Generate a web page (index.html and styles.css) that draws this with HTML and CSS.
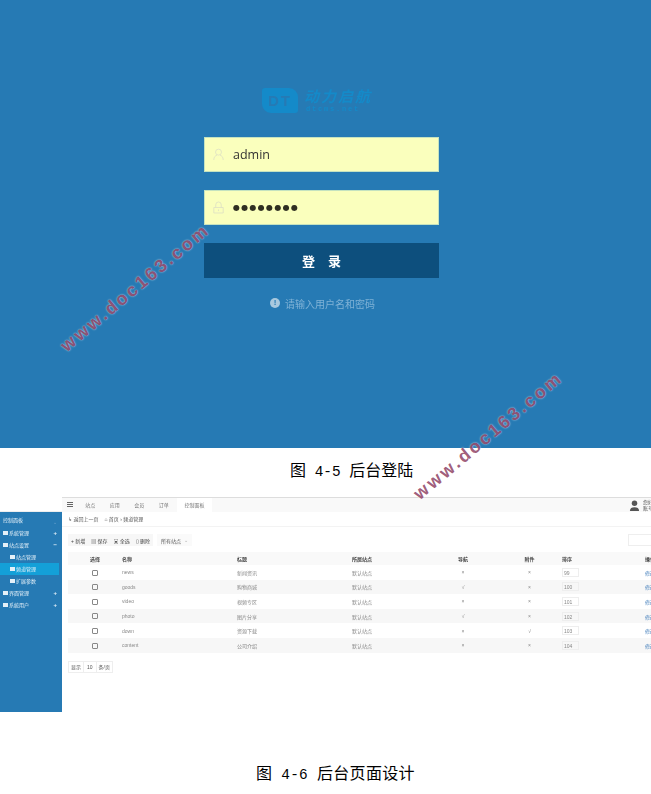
FILE: index.html
```html
<!DOCTYPE html>
<html lang="zh-CN">
<head>
  <meta charset="UTF-8">
  <title>后台登陆与页面设计</title>
  <meta name="viewport" content="width=device-width, initial-scale=1.0">
  <link rel="stylesheet" href="styles.css">
</head>
<body>

<div class="page">

  <div class="login">
    <div class="logo">
      <div class="logo-mark">DT</div>
      <div class="logo-words">
        <div class="logo-cn">动力启航</div>
        <div class="logo-en">dtcms.net</div>
      </div>
    </div>

    <div class="field">
      <svg class="field-icon" viewBox="0 0 14 16"><circle cx="7" cy="5" r="3.8"/><path d="M1 15c0-4 2-5.500 4-6M13 15c0-4-2-5.500-4-6"/></svg>
      <span>admin</span>
    </div>
    <div class="field">
      <svg class="field-icon" viewBox="0 0 14 16"><path d="M3.500 8V4.500a3.500 3.500 0 0 1 7 0V8"/><path d="M1 8h12v7H1z"/><path d="M7 10.500v2"/></svg>
      <span class="dots">●●●●●●●●</span>
    </div>
    <div class="login-btn">登<i></i>录</div>

    <div class="hint">
      <span class="hint-icon">!</span>
      <span>请输入用户名和密码</span>
    </div>
  </div>

  <div class="caption caption-one">图<span class="latin"> 4-5 </span>后台登陆</div>

  <div class="admin">
    <div class="side">
      <div class="side-logo"></div>
      <div class="side-menu">
        <div class="side-title"><span>控制面板</span><em>⌄</em></div>
        <div class="side-item"><b></b><span>系统管理</span><em>+</em></div>
        <div class="side-item"><b></b><span>站点设置</span><em>−</em></div>
        <div class="side-item sub"><b></b><span>站点管理</span></div>
        <div class="side-item sub on"><b></b><span>频道管理</span></div>
        <div class="side-item sub"><b></b><span>扩展参数</span></div>
        <div class="side-item"><b></b><span>界面管理</span><em>+</em></div>
        <div class="side-item"><b></b><span>系统用户</span><em>+</em></div>
      </div>
    </div>

    <div class="main">
      <div class="topbar">
        <div class="burger"><i></i><i></i><i></i></div>
        <div class="tab">站点</div>
        <div class="tab">应用</div>
        <div class="tab">会员</div>
        <div class="tab">订单</div>
        <div class="tab active">控制面板</div>
        <div class="user">
          <svg viewBox="0 0 12 12"><circle cx="6" cy="3.500" r="3"/><path d="M1 12c0-3 2-4 5-4s5 1 5 4z"/></svg>
          <div>您好<br>账号</div>
        </div>
      </div>

      <div class="crumbs">
        <span>↳ 返回上一页</span>
        <span>⌂ 首页 › 频道管理</span>
      </div>

      <div class="tools">
        <div class="tool-group">
          <span>+ 新增</span>
          <span>▤ 保存</span>
          <span>▣ 全选</span>
          <span>▯ 删除</span>
        </div>
        <div class="tool-select"><span>所有站点</span><em>⌄</em></div>
        <div class="tool-search"></div>
      </div>

      <table class="grid">
        <thead>
          <tr>
            <th class="c-check">选择</th>
            <th class="c-name">名称</th>
            <th class="c-title">标题</th>
            <th class="c-site">所属站点</th>
            <th class="c-mid">导航</th>
            <th class="c-mid2">附件</th>
            <th class="c-sort">排序</th>
            <th class="c-op">操作</th>
          </tr>
        </thead>
        <tbody>
          <tr><td class="c-check"><i class="box"></i></td><td>news</td><td>新闻资讯</td><td>默认站点</td><td class="c-mid">×</td><td class="c-mid2">×</td><td><span class="num">99</span></td><td class="link">修改</td></tr>
          <tr><td class="c-check"><i class="box"></i></td><td>goods</td><td>购物商城</td><td>默认站点</td><td class="c-mid">√</td><td class="c-mid2">×</td><td><span class="num">100</span></td><td class="link">修改</td></tr>
          <tr><td class="c-check"><i class="box"></i></td><td>video</td><td>视频专区</td><td>默认站点</td><td class="c-mid">×</td><td class="c-mid2">×</td><td><span class="num">101</span></td><td class="link">修改</td></tr>
          <tr><td class="c-check"><i class="box"></i></td><td>photo</td><td>图片分享</td><td>默认站点</td><td class="c-mid">√</td><td class="c-mid2">×</td><td><span class="num">102</span></td><td class="link">修改</td></tr>
          <tr><td class="c-check"><i class="box"></i></td><td>down</td><td>资源下载</td><td>默认站点</td><td class="c-mid">×</td><td class="c-mid2">√</td><td><span class="num">103</span></td><td class="link">修改</td></tr>
          <tr><td class="c-check"><i class="box"></i></td><td>content</td><td>公司介绍</td><td>默认站点</td><td class="c-mid">×</td><td class="c-mid2">×</td><td><span class="num">104</span></td><td class="link">修改</td></tr>
        </tbody>
      </table>

      <div class="pager">
        <span>显示</span>
        <span>10</span>
        <span>条/页</span>
      </div>
    </div>
  </div>

  <div class="caption caption-two">图<span class="latin"> 4-6 </span>后台页面设计</div>

  <div class="mark mark-one">www.doc163.com</div>
  <div class="mark mark-two">www.doc163.com</div>

</div>

</body>
</html>
```

FILE: styles.css
```css
html, body { margin: 0; padding: 0; background: #fff; }
body { font-family: "Liberation Sans", "Noto Sans CJK SC", sans-serif; }

.page {
  position: relative;
  width: 651px;
  height: 794px;
  overflow: hidden;
}

/* login */
.login {
  height: 448px;
  background: #267ab4;
  display: flex;
  flex-direction: column;
  align-items: flex-start;
  box-sizing: border-box;
  padding: 88px 0 0 204px;
  filter: blur(0.5px);
}
.logo {
  display: flex;
  gap: 6px;
  height: 25px;
  margin-bottom: 24px;
  margin-left: 58px;
}
.logo-mark {
  width: 36px;
  height: 25px;
  background: #148ac9;
  border-radius: 3px 9px 3px 9px;
  color: #267ab4;
  font: bold 15px/25px "Liberation Sans", sans-serif;
  letter-spacing: 2px;
  text-align: center;
}
.logo-cn {
  color: #148ac9;
  font: italic bold 15px/16px "Noto Sans CJK SC", sans-serif;
  letter-spacing: 2px;
}
.logo-en {
  color: #148ac9;
  font: bold 7px/7px "Liberation Mono", monospace;
  letter-spacing: 1.800px;
  padding: 2px 0 0 2px;
}

.field {
  width: 235px;
  height: 35px;
  box-sizing: border-box;
  margin-bottom: 18px;
  background: #faffbd;
  border: 1px solid #c4e2c0;
  display: flex;
  align-items: center;
  padding: 0 0 1px 8px;
  color: #333;
  font: 12.500px "Open Sans", sans-serif;
}
.field-icon {
  width: 11px;
  height: 13px;
  margin-right: 9px;
  fill: none;
  stroke: #dcdfc4;
  stroke-width: 1;
}
.dots { font: 8px "DejaVu Sans", sans-serif; letter-spacing: 1.300px; color: #2f2f22; }

.login-btn {
  width: 235px;
  height: 35px;
  background: #0d4f7d;
  color: #fff;
  font: bold 13px/35px "Noto Sans CJK SC", sans-serif;
  display: flex;
  justify-content: center;
}
.login-btn i { width: 13px; }

.hint {
  margin: 19px 0 0 66px;
  display: flex;
  align-items: center;
  gap: 5px;
  color: #7fb2d6;
  font: 10px/14px "Noto Sans CJK SC", sans-serif;
}
.hint-icon {
  width: 10px;
  height: 10px;
  border-radius: 50%;
  background: #a8c8de;
  color: #267ab4;
  font: bold 8px/10px "Liberation Sans", sans-serif;
  text-align: center;
  margin-top: -3px;
}

/* captions */
.caption {
  color: #000;
  font: 16px/18px "Noto Sans CJK SC", sans-serif;
}
.latin { font: 14.400px/18px "Liberation Mono", monospace; white-space: pre; }
.caption-one { height: 49px; box-sizing: border-box; padding: 12px 0 0 290px; }
.caption-two { padding: 51px 0 0 256px; letter-spacing: 0.300px; }

/* admin screen */
.admin {
  height: 215px;
  display: flex;
  font-size: 5px;
  color: #555;
  filter: blur(0.45px);
}
.side { width: 62px; flex: none; display: flex; flex-direction: column; }
.side-logo { height: 15px; box-sizing: border-box; background: #fff; border-bottom: 1px solid #eee; }
.side-menu { flex: 1; background: #267ab4; color: #e4f0f8; }
.side-title, .side-item {
  height: 12px;
  line-height: 12px;
  display: flex;
  align-items: center;
  padding: 0 5px 0 3px;
}
.side-title { height: 15px; }
.side-title em { margin-left: auto; margin-top: 4px; font-style: normal; color: #6fa8d0; }
.side-item b { width: 5px; height: 4px; background: #e4f0f8; margin-right: 1px; }
.side-item em { margin-left: auto; font-style: normal; font-size: 6px; font-weight: bold; }
.side-item.sub { padding-left: 10px; margin-right: 3px; }
.side-item.on { background: #14a0d8; }

.main { flex: 1; min-width: 0; }

.topbar {
  height: 15px;
  box-sizing: border-box;
  border-top: 1px solid #ddd;
  background: #f9f9f9;
  display: flex;
  align-items: center;
  padding-left: 5px;
}
.burger { width: 6px; margin-right: 5px; }
.burger i { display: block; height: 1px; margin-bottom: 1px; background: #666; }
.tab { width: 24.500px; text-align: center; line-height: 14px; color: #777; }
.tab.active { width: 35px; background: #fff; margin-left: 1px; }
.user {
  margin-left: auto;
  display: flex;
  align-items: center;
  gap: 3px;
  width: 22px;
  flex: none;
  line-height: 6px;
  white-space: nowrap;
}
.user svg { width: 11px; height: 11px; flex: none; fill: #555; }

.crumbs {
  height: 15px;
  box-sizing: border-box;
  border-bottom: 1px solid #f3f3f3;
  display: flex;
  gap: 6px;
  align-items: center;
  padding: 0 0 2px 6px;
}

.tools {
  display: flex;
  gap: 4px;
  margin: 7px 0 6px 6px;
  height: 12px;
}
.tool-group {
  width: 85px;
  background: #f7f7f7;
  display: flex;
  justify-content: space-around;
  align-items: center;
  color: #444;
}
.tool-select {
  width: 35px;
  box-sizing: border-box;
  background: #fafafa;
  display: flex;
  align-items: center;
  justify-content: space-between;
  padding: 0 4px;
}
.tool-select em { font-style: normal; color: #aaa; }
.tool-search {
  margin-left: auto;
  width: 23px;
  box-sizing: border-box;
  border: 1px solid #eee;
  border-right: 0;
}

.grid {
  margin-left: 6px;
  width: 605px;
  border-collapse: collapse;
  table-layout: fixed;
}
.grid th, .grid td {
  height: 14.600px;
  padding: 0;
  text-align: left;
  white-space: nowrap;
  overflow: hidden;
  color: #888;
}
.grid th { height: 13px; background: #f9f9f9; color: #444; font-weight: bold; }
.grid tbody tr:nth-child(even) td { background: #f7f7f7; }
.grid .c-check { width: 54px; text-align: center; }
.grid .c-name { width: 115px; }
.grid .c-title { width: 115px; }
.grid .c-site { width: 93px; }
.grid .c-mid { width: 36px; text-align: center; }
.grid .c-mid2 { width: 81px; padding-left: 16px; box-sizing: border-box; text-align: center; }
.grid .c-sort { width: 83px; }
.grid .c-op { width: 28px; }
.grid .link { color: #3a78b8; }

.box {
  display: inline-block;
  width: 4px;
  height: 4px;
  border: 1px solid #888;
  border-radius: 1px;
  vertical-align: middle;
}
.num {
  display: inline-block;
  width: 17px;
  height: 9px;
  line-height: 8px;
  box-sizing: border-box;
  border: 1px solid #eee;
  padding-left: 1px;
}

.pager {
  display: inline-flex;
  margin: 8px 0 0 6px;
  border: 1px solid #eee;
  height: 10px;
  align-items: center;
}
.pager span { padding: 0 2px; line-height: 10px; color: #555; }
.pager span:nth-child(2) { border-left: 1px solid #eee; border-right: 1px solid #eee; padding: 0 3px; }

/* site watermark over everything */
.mark {
  position: absolute;
  font: bold 18px/20px "Liberation Sans", sans-serif;
  letter-spacing: 2.700px;
  white-space: nowrap;
  transform: rotate(-40deg);
  transform-origin: left center;
  color: rgba(125, 35, 75, 0.74);
  text-shadow: 0 0 2px rgba(255, 255, 255, 0.6), 0 0 1px rgba(255, 255, 255, 0.35);
}
.mark-one { left: 63px; top: 338px; }
.mark-two { left: 416px; top: 486px; }
```
